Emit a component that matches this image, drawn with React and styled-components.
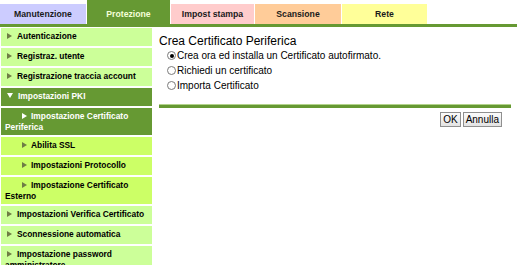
import React, { useState } from 'react';
import styled, { createGlobalStyle } from 'styled-components';

const GlobalStyle = createGlobalStyle`
    html, body {
        margin: 0;
        padding: 0;
        background: #ffffff;
        font-family: "Liberation Sans", Arial, sans-serif;
    }
`

const Page = styled.div`
    width: 517px;
    height: 265px;
    overflow: hidden;
`

const TabBar = styled.div`
    display: flex;
    align-items: flex-end;
    gap: 1px;
    height: 24px;
    border-bottom: 3px solid #669933;
`

const Tab = styled.div`
    width: ${p => p.w}px;
    height: ${p => (p.active ? 24 : 20)}px;
    padding-top: ${p => (p.active ? 4 : 0)}px;
    box-sizing: border-box;
    background: ${p => p.bg};
    color: ${p => (p.active ? '#f4ffd8' : '#1a1a1a')};
    font-size: 8.7px;
    font-weight: bold;
    line-height: 20px;
    text-align: center;
`

const Body = styled.div`
    display: flex;
    align-items: flex-start;
`

const Sidebar = styled.div`
    width: 151px;
    margin: 1px 0 0 1px;
    display: flex;
    flex-direction: column;
    gap: 2px;
`

const MenuItem = styled.div`
    min-height: 18px;
    box-sizing: border-box;
    padding: 3px 1px 2px 4px;
    background: ${p => (p.active ? '#669933' : p.sub ? '#ccff66' : '#ccff99')};
    color: ${p => (p.active ? '#ffffff' : '#000000')};
    font-size: 8.4px;
    font-weight: bold;
    line-height: 11px;
`

const Arrow = styled.span`
    display: inline-block;
    width: 0;
    height: 0;
    margin-left: ${p => (p.sub ? 17 : 2)}px;
    margin-right: ${p => (p.sub ? 4 : 5)}px;
    vertical-align: ${p => (p.open ? '1px' : '0px')};
    ${p => p.open
        ? `border-top: 5px solid ${p.color};
           border-left: 3px solid transparent;
           border-right: 3px solid transparent;`
        : `border-left: 5px solid ${p.color};
           border-top: 3.5px solid transparent;
           border-bottom: 3.5px solid transparent;`}
`

const Main = styled.div`
    flex: 1;
    padding: 7px 6px 0 7px;
`

const Title = styled.div`
    font-size: 12px;
    line-height: 14px;
    color: #000;
`

const Options = styled.div`
    margin: 0 0 11px 8px;
`

const OptionRow = styled.label`
    display: flex;
    align-items: center;
    height: 15px;
    font-size: 10px;
    color: #000;
    cursor: pointer;
`

const Radio = styled.input`
    appearance: none;
    width: 9px;
    height: 9px;
    margin: 0 1px 0 0;
    border: 1px solid #7a7a7a;
    border-radius: 50%;
    background: #fff;
    display: grid;
    place-items: center;
    &:checked::after {
        content: '';
        width: 4px;
        height: 4px;
        border-radius: 50%;
        background: #000;
    }
`

const Divider = styled.div`
    height: 3px;
    background: #669933;
    border-top: 1px solid #b3d38c;
`

const Buttons = styled.div`
    display: flex;
    justify-content: flex-end;
    gap: 2px;
    margin: 4px 9px 0 0;
`

const Button = styled.button`
    height: 15px;
    padding: 0 2px;
    border: 1px solid #8f8f8f;
    background: linear-gradient(#fbfbfb, #e3e3e3);
    font-family: "Liberation Sans", Arial, sans-serif;
    font-size: 10px;
    line-height: 13px;
    color: #000;
`

const tabs = [
    { label: 'Manutenzione', bg: '#ccccff', w: 86 },
    { label: 'Protezione', bg: '#669933', w: 83, active: true },
    { label: 'Impost stampa', bg: '#ffcccc', w: 83 },
    { label: 'Scansione', bg: '#ffcc99', w: 86 },
    { label: 'Rete', bg: '#ffff99', w: 85 },
]

const menu = [
    { label: 'Autenticazione' },
    { label: 'Registraz. utente' },
    { label: 'Registrazione traccia account' },
    { label: 'Impostazioni PKI', active: true, open: true },
    { label: 'Impostazione Certificato Periferica', active: true, sub: true },
    { label: 'Abilita SSL', sub: true },
    { label: 'Impostazioni Protocollo', sub: true },
    { label: 'Impostazione Certificato Esterno', sub: true },
    { label: 'Impostazioni Verifica Certificato' },
    { label: 'Sconnessione automatica' },
    { label: 'Impostazione password amministratore' },
]

const options = [
    'Crea ora ed installa un Certificato autofirmato.',
    'Richiedi un certificato',
    'Importa Certificato',
]

export default function App() {
    const [choice, setChoice] = useState(0)

    return (
        <Page>
            <GlobalStyle />
            <TabBar>
                {tabs.map(t => (
                    <Tab key={t.label} bg={t.bg} w={t.w} active={t.active}>{t.label}</Tab>
                ))}
            </TabBar>
            <Body>
                <Sidebar>
                    {menu.map(m => (
                        <MenuItem key={m.label} active={m.active} sub={m.sub}>
                            <Arrow
                                sub={m.sub}
                                open={m.open}
                                color={m.active ? '#ffffff' : '#6f7d45'}
                            />
                            {m.label}
                        </MenuItem>
                    ))}
                </Sidebar>
                <Main>
                    <Title>Crea Certificato Periferica</Title>
                    <Options>
                        {options.map((o, i) => (
                            <OptionRow key={o}>
                                <Radio
                                    type='radio'
                                    name='cert'
                                    checked={choice === i}
                                    onChange={() => setChoice(i)}
                                />
                                {o}
                            </OptionRow>
                        ))}
                    </Options>
                    <Divider />
                    <Buttons>
                        <Button>OK</Button>
                        <Button>Annulla</Button>
                    </Buttons>
                </Main>
            </Body>
        </Page>
    )
}
